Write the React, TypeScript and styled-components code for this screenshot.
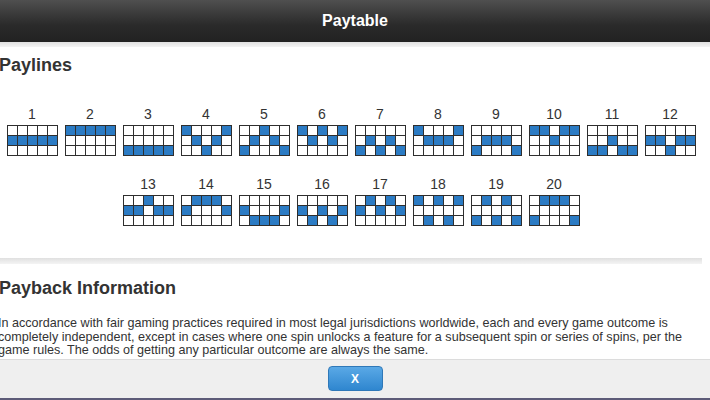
import React from 'react';
import styled, { createGlobalStyle } from 'styled-components';

const GlobalStyle = createGlobalStyle`
    html, body {
        margin: 0;
        padding: 0;
        overflow: hidden;
        background: #ffffff;
        font-family: "Liberation Sans", Arial, sans-serif;
    }
`;

// rows of blue cells, one string per row: 1 = lit
const PAYLINES: string[][] = [
    ['00000', '11111', '00000'],
    ['11111', '00000', '00000'],
    ['00000', '00000', '11111'],
    ['10001', '01010', '00100'],
    ['00100', '01010', '10001'],
    ['10101', '01010', '00000'],
    ['00000', '01010', '10101'],
    ['10001', '01110', '00000'],
    ['00000', '01110', '10001'],
    ['11011', '00100', '00000'],
    ['00000', '00100', '11011'],
    ['00000', '11011', '00100'],
    ['00100', '11011', '00000'],
    ['01110', '10001', '00000'],
    ['00000', '10001', '01110'],
    ['00000', '10101', '01010'],
    ['01010', '10101', '00000'],
    ['10101', '00000', '01010'],
    ['01010', '00000', '10101'],
    ['01110', '00000', '10001'],
];

const Frame = styled.div`
    width: 710px;
    height: 400px;
    display: flex;
    flex-direction: column;
    overflow: hidden;
`;

const Header = styled.div`
    height: 42px;
    flex: none;
    display: flex;
    align-items: center;
    justify-content: center;
    background: linear-gradient(#4f4f4f, #2a2a2a 60%, #222222);
    color: #ffffff;
    font-size: 16px;
    font-weight: bold;
`;

const Band = styled.div<{ $h: number }>`
    height: ${({ $h }) => $h}px;
    flex: none;
    background: linear-gradient(#e0e0e0, #f4f4f4);
`;

const Body = styled.div`
    flex: 1;
    overflow: hidden;
    background: #ffffff;
    padding-right: 8px;
`;

const Section = styled.div`
    padding-bottom: 32px;
`;

const Heading = styled.h2<{ $top: number }>`
    margin: ${({ $top }) => $top}px 0 0 -1px;
    font-size: 18px;
    line-height: 21px;
    font-weight: bold;
    color: #333333;
`;

const Lines = styled.div`
    display: flex;
    flex-wrap: wrap;
    justify-content: center;
    row-gap: 20px;
    margin-top: 30px;
`;

const Line = styled.div`
    width: 51px;
    margin: 0 3.5px;
    display: flex;
    flex-direction: column;
    align-items: center;
    gap: 3px;
`;

const Label = styled.span`
    font-size: 14px;
    line-height: 16px;
    color: #333333;
`;

const Grid = styled.div`
    display: grid;
    grid-template-columns: repeat(5, 9px);
    grid-template-rows: repeat(3, 9px);
    gap: 1px;
    padding: 1px;
    background: #2e2e2e;
`;

const Cell = styled.div<{ $on: boolean }>`
    background: ${({ $on }) => ($on ? '#2b7bc4' : '#ffffff')};
`;

const Para = styled.p`
    margin: 18px 0 0 -2px;
    font-size: 12.6px;
    line-height: 13.5px;
    color: #333333;
`;

const Footer = styled.div`
    height: 41px;
    flex: none;
    display: flex;
    justify-content: center;
    padding-top: 6px;
    box-sizing: border-box;
    background: #efefef;
    border-top: 1px solid #dcdcdc;
    border-bottom: 2px solid #5d5b78;
`;

const CloseButton = styled.button`
    width: 55px;
    height: 25px;
    border: 1px solid #2f78b8;
    border-radius: 4px;
    background: linear-gradient(#5aa9e6, #2f86cf);
    color: #ffffff;
    font-family: "Liberation Sans", Arial, sans-serif;
    font-size: 12px;
    font-weight: bold;
    padding: 0;
`;

function Payline({ n, rows }: { n: number; rows: string[] }) {
    return (
        <Line>
            <Label>{n}</Label>
            <Grid>
                {rows.join('').split('').map((c, i) => (
                    <Cell key={i} $on={c === '1'} />
                ))}
            </Grid>
        </Line>
    );
}

export default function App() {
    return (
        <Frame>
            <GlobalStyle />
            <Header>Paytable</Header>
            <Band $h={5} />
            <Body>
                <Section>
                    <Heading $top={8}>Paylines</Heading>
                    <Lines>
                        {PAYLINES.map((rows, i) => (
                            <Payline key={i} n={i + 1} rows={rows} />
                        ))}
                    </Lines>
                </Section>
                <Band $h={6} />
                <Heading $top={14}>Payback Information</Heading>
                <Para>
                    In accordance with fair gaming practices required in most legal jurisdictions worldwide, each and every game outcome is
                    completely independent, except in cases where one spin unlocks a feature for a subsequent spin or series of spins, per the
                    game rules. The odds of getting any particular outcome are always the same.
                </Para>
            </Body>
            <Footer>
                <CloseButton>X</CloseButton>
            </Footer>
        </Frame>
    );
}
